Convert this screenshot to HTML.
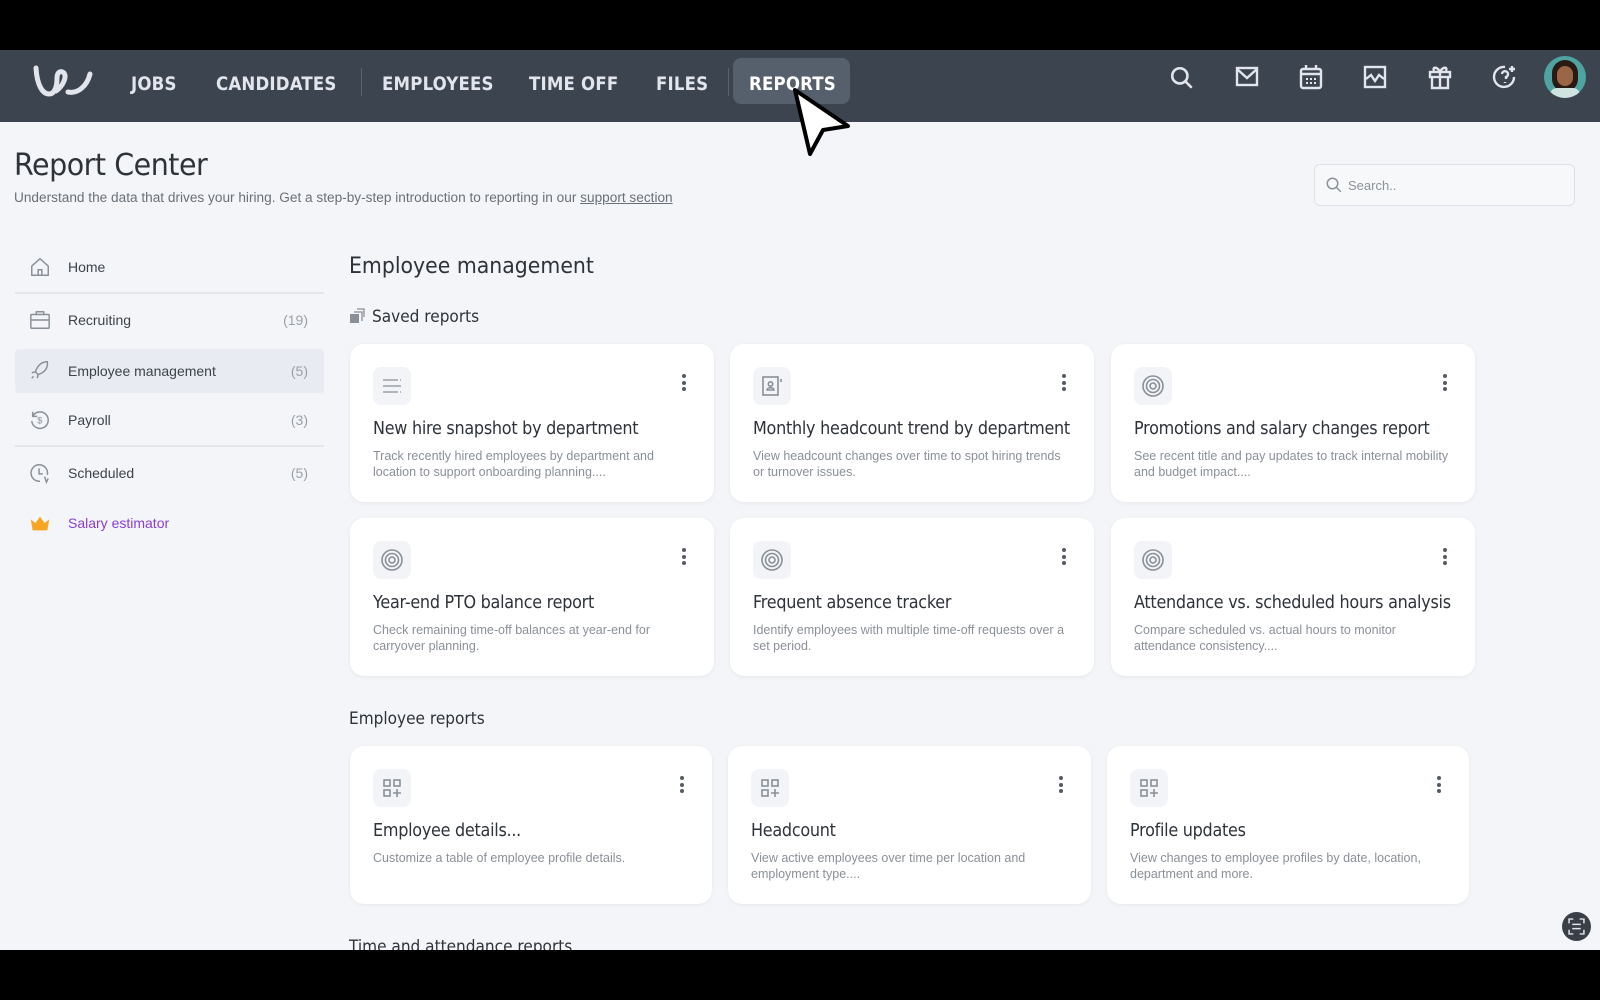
<!DOCTYPE html>
<html><head><meta charset="utf-8"><style>
*{margin:0;padding:0;box-sizing:border-box}
body{width:1600px;height:1000px;background:#000;position:relative;overflow:hidden;font-family:"Liberation Sans",sans-serif}
.abs{position:absolute}
#nav{left:0;top:50px;width:1600px;height:72px;background:#3c4450}
.nl{position:absolute;top:73px;font-size:19px;font-weight:bold;color:#e2e5ec;letter-spacing:.2px;font-family:"DejaVu Sans Condensed","Liberation Sans",sans-serif;transform:scaleX(.97);transform-origin:left}
#page{left:0;top:122px;width:1600px;height:828px;background:#f3f5f8;overflow:hidden}
.side{position:absolute;left:15px;width:309px;height:48px;font-size:14px;color:#3d434b}
.side .t{position:absolute;left:53px;top:15px}
.side .c{position:absolute;right:16px;top:15px;color:#9aa0a8}
.side svg{position:absolute;left:14px;top:12px}
.hr{position:absolute;left:15px;width:309px;height:2px;background:#e3e6eb}
.card{position:absolute;width:364px;height:158px;background:#fff;border-radius:14px;box-shadow:0 1px 4px rgba(0,0,0,.06)}
.card .ib{position:absolute;left:23px;top:23px;width:38px;height:38px;border-radius:8px;background:#f2f4f7}
.card .ib svg{position:absolute;left:7px;top:7px}
.card .dots{position:absolute;right:28px;top:30px;width:4px}
.card .dots i{display:block;width:4px;height:4px;border-radius:2px;background:#555b63;margin-bottom:2.5px}
.card h3{position:absolute;left:23px;top:74px;font-size:18px;font-weight:normal;color:#2e333a;font-family:"DejaVu Sans","Liberation Sans",sans-serif;letter-spacing:-.3px;white-space:nowrap;transform:scaleX(.89);transform-origin:left}
.card p{position:absolute;left:23px;top:104px;width:316px;font-size:12.5px;line-height:16px;color:#8a9098}
</style></head><body>
<div id="nav" class="abs"></div>
<svg class="abs" style="left:33px;top:64px" width="62" height="34" viewBox="0 0 62 34"><path d="M3 4 C4 22 10 30 16 30 C22 30 24 22 24 14 C24 8 28 6 31 9 C34 13 30 22 23 27 M35 28 C45 30 54 22 57 10" fill="none" stroke="#e2e5ec" stroke-width="5" stroke-linecap="round"/></svg>
<div class="nl" style="left:131px">JOBS</div>
<div class="nl" style="left:216px">CANDIDATES</div>
<div class="abs" style="left:361px;top:68px;width:1px;height:28px;background:#5a626e"></div>
<div class="nl" style="left:382px">EMPLOYEES</div>
<div class="nl" style="left:529px">TIME OFF</div>
<div class="nl" style="left:656px">FILES</div>
<div class="abs" style="left:728px;top:68px;width:1px;height:28px;background:#5a626e"></div>
<div class="abs" style="left:733px;top:58px;width:117px;height:46px;border-radius:8px;background:#56606c"></div>
<div class="nl" style="left:749px;color:#fff">REPORTS</div>
<svg class="abs" style="left:1169px;top:65px" width="26" height="26" viewBox="0 0 24 24" fill="none" stroke="#e2e5ec" stroke-width="2.4"><circle cx="10" cy="10" r="7"/><path d="M15 15l6 6"/></svg>
<svg class="abs" style="left:1235px;top:66px" width="24" height="22" viewBox="0 0 24 22" fill="none" stroke="#e2e5ec" stroke-width="2.4"><rect x="2" y="2" width="20" height="17"/><path d="M2 3l10 9 10-9"/></svg>
<svg class="abs" style="left:1299px;top:64px" width="24" height="26" viewBox="0 0 24 26" fill="none" stroke="#e2e5ec" stroke-width="2.4"><rect x="2" y="5" width="20" height="19" rx="2"/><path d="M2 10h20M7 1v5M17 1v5"/><path d="M7 15h2M11 15h2M15 15h2M7 19h2M11 19h2M15 19h2" stroke-width="2"/></svg>
<svg class="abs" style="left:1363px;top:65px" width="24" height="24" viewBox="0 0 24 24" fill="none" stroke="#e2e5ec" stroke-width="2.4"><rect x="2" y="2" width="20" height="20"/><path d="M3 14l5-4 4 6 4-6 5 4"/></svg>
<svg class="abs" style="left:1428px;top:64px" width="24" height="26" viewBox="0 0 24 26" fill="none" stroke="#e2e5ec" stroke-width="2.4"><rect x="2" y="8" width="20" height="5"/><path d="M4 13v11h16V13M12 8v16M12 8c-3-6-8-5-6-1M12 8c3-6 8-5 6-1"/></svg>
<svg class="abs" style="left:1492px;top:64px" width="26" height="26" viewBox="0 0 26 26" fill="none" stroke="#e2e5ec" stroke-width="2.4"><path d="M22 13a10 10 0 1 1-9-10"/><path d="M10 10a3 3 0 1 1 4 3v2M13 18v1"/><path d="M20 2v6M17 5h6"/></svg>
<div class="abs" style="left:1544px;top:56px;width:42px;height:42px;border-radius:50%;background:#4fa3a0;overflow:hidden"><div class="abs" style="left:8px;top:4px;width:26px;height:32px;border-radius:13px;background:#2a1a14"></div><div class="abs" style="left:13px;top:10px;width:16px;height:20px;border-radius:8px;background:#9a6648"></div><div class="abs" style="left:6px;top:32px;width:30px;height:14px;border-radius:10px;background:#cfe3e0"></div></div>

<div id="page" class="abs">
<div class="abs" style="left:14px;top:26px;font-size:30px;color:#2e333a;font-family:'DejaVu Sans','Liberation Sans',sans-serif;letter-spacing:-.5px;transform:scaleX(.95);transform-origin:left">Report Center</div>
<div class="abs" style="left:14px;top:68px;font-size:13.5px;color:#6a7078;transform:scaleX(1.01);transform-origin:left">Understand the data that drives your hiring. Get a step-by-step introduction to reporting in our <u>support section</u></div>
<div class="abs" style="left:1314px;top:42px;width:261px;height:42px;border:1px solid #dde1e6;border-radius:6px;background:#f7f8fa"><svg class="abs" style="left:10px;top:11px" width="18" height="18" viewBox="0 0 24 24" fill="none" stroke="#8c929a" stroke-width="2"><circle cx="10" cy="10" r="7"/><path d="M15 15l6 6"/></svg><span class="abs" style="left:33px;top:13px;font-size:13px;color:#8c929a">Search..</span></div>

<div class="side" style="top:122px"><svg width="22" height="22" viewBox="0 0 24 24" fill="none" stroke="#8a9098" stroke-width="1.6"><path d="M3 11L12 3l9 8v10H3z"/><path d="M10 21v-6h4v6"/></svg><span class="t">Home</span></div>
<div class="hr" style="top:170px"></div>
<div class="side" style="top:175px"><svg width="22" height="22" viewBox="0 0 24 24" fill="none" stroke="#8a9098" stroke-width="1.6"><rect x="2" y="6" width="20" height="15" rx="1"/><path d="M8 6V3h8v3M2 12h20"/></svg><span class="t">Recruiting</span><span class="c">(19)</span></div>
<div class="side" style="top:227px;height:44px;background:#e8ebf1;border-radius:4px"><svg width="22" height="22" viewBox="0 0 24 24" fill="none" stroke="#8a9098" stroke-width="1.6" style="top:10px"><path d="M20 3c-7 0-11 5-13 11l3 3c6-2 11-6 10-14zM7 14l-4 1M10 17l-1 4M5 19l-2 2"/></svg><span class="t" style="top:14px">Employee management</span><span class="c" style="top:14px">(5)</span></div>
<div class="side" style="top:275px"><svg width="22" height="22" viewBox="0 0 24 24" fill="none" stroke="#8a9098" stroke-width="1.6"><path d="M4 8a9 9 0 1 1-1 5M4 3v5h5"/><text x="9" y="16" font-size="10" fill="#8a9098" stroke="none">$</text></svg><span class="t">Payroll</span><span class="c">(3)</span></div>
<div class="hr" style="top:323px"></div>
<div class="side" style="top:328px"><svg width="22" height="22" viewBox="0 0 24 24" fill="none" stroke="#8a9098" stroke-width="1.6"><path d="M20 14a9 9 0 1 0-8 7M11 7v6h4M17 16l2 6 2-4"/></svg><span class="t">Scheduled</span><span class="c">(5)</span></div>
<div class="side" style="top:378px"><svg width="22" height="22" viewBox="0 0 24 24" style="top:12px"><path d="M2 8l5 4 5-7 5 7 5-4-2 12H4z" fill="#f5a623"/></svg><span class="t" style="color:#8a3fd1">Salary estimator</span></div>

<div class="abs" style="left:349px;top:132px;font-size:22px;color:#2e333a;font-family:'DejaVu Sans','Liberation Sans',sans-serif;transform:scaleX(.93);transform-origin:left">Employee management</div>
<svg class="abs" style="left:349px;top:186px" width="16" height="16" viewBox="0 0 16 16"><rect x="1" y="6" width="9" height="9" fill="#8a9098"/><path d="M5 4h8v9M8 1h7v8" fill="none" stroke="#8a9098" stroke-width="1.3"/></svg>
<div class="abs" style="left:372px;top:185px;font-size:16.5px;color:#2e333a;font-family:'DejaVu Sans','Liberation Sans',sans-serif;transform:scaleX(.93);transform-origin:left">Saved reports</div>

<div class="card" style="left:350px;top:222px"><div class="ib"><svg width="24" height="24" viewBox="0 0 24 24" stroke="#9aa0a8" stroke-width="1.6"><path d="M3 6h15M3 12h18M3 18h15M20 6h1M20 18h1"/></svg></div><div class="dots"><i></i><i></i><i></i></div><h3>New hire snapshot by department</h3><p>Track recently hired employees by department and location to support onboarding planning....</p></div>
<div class="card" style="left:730px;top:222px"><div class="ib"><svg width="24" height="24" viewBox="0 0 24 24" fill="none" stroke="#8a9098" stroke-width="1.6"><rect x="3" y="3" width="15" height="18"/><circle cx="10.5" cy="10" r="2.2"/><path d="M7 16c0-3 7-3 7 0z M21 5v3"/></svg></div><div class="dots"><i></i><i></i><i></i></div><h3>Monthly headcount trend by department</h3><p>View headcount changes over time to spot hiring trends or turnover issues.</p></div>
<div class="card" style="left:1111px;top:222px"><div class="ib"><svg width="24" height="24" viewBox="0 0 24 24" fill="none" stroke="#8a9098" stroke-width="1.6"><circle cx="12" cy="12" r="10"/><circle cx="12" cy="12" r="6.5"/><circle cx="12" cy="12" r="3"/></svg></div><div class="dots"><i></i><i></i><i></i></div><h3>Promotions and salary changes report</h3><p>See recent title and pay updates to track internal mobility and budget impact....</p></div>
<div class="card" style="left:350px;top:396px"><div class="ib"><svg width="24" height="24" viewBox="0 0 24 24" fill="none" stroke="#8a9098" stroke-width="1.6"><circle cx="12" cy="12" r="10"/><circle cx="12" cy="12" r="6.5"/><circle cx="12" cy="12" r="3"/></svg></div><div class="dots"><i></i><i></i><i></i></div><h3>Year-end PTO balance report</h3><p>Check remaining time-off balances at year-end for carryover planning.</p></div>
<div class="card" style="left:730px;top:396px"><div class="ib"><svg width="24" height="24" viewBox="0 0 24 24" fill="none" stroke="#8a9098" stroke-width="1.6"><circle cx="12" cy="12" r="10"/><circle cx="12" cy="12" r="6.5"/><circle cx="12" cy="12" r="3"/></svg></div><div class="dots"><i></i><i></i><i></i></div><h3>Frequent absence tracker</h3><p>Identify employees with multiple time-off requests over a set period.</p></div>
<div class="card" style="left:1111px;top:396px"><div class="ib"><svg width="24" height="24" viewBox="0 0 24 24" fill="none" stroke="#8a9098" stroke-width="1.6"><circle cx="12" cy="12" r="10"/><circle cx="12" cy="12" r="6.5"/><circle cx="12" cy="12" r="3"/></svg></div><div class="dots"><i></i><i></i><i></i></div><h3>Attendance vs. scheduled hours analysis</h3><p>Compare scheduled vs. actual hours to monitor attendance consistency....</p></div>

<div class="abs" style="left:349px;top:587px;font-size:16.5px;color:#2e333a;font-family:'DejaVu Sans','Liberation Sans',sans-serif;transform:scaleX(.93);transform-origin:left">Employee reports</div>
<div class="card" style="left:350px;top:624px;width:362px"><div class="ib"><svg width="24" height="24" viewBox="0 0 24 24" fill="none" stroke="#8a9098" stroke-width="1.6"><rect x="4" y="4" width="6" height="6"/><rect x="14" y="4" width="6" height="6"/><rect x="4" y="14" width="6" height="6"/><path d="M17 13v8M13 17h8"/></svg></div><div class="dots"><i></i><i></i><i></i></div><h3>Employee details...</h3><p>Customize a table of employee profile details.</p></div>
<div class="card" style="left:728px;top:624px;width:363px"><div class="ib"><svg width="24" height="24" viewBox="0 0 24 24" fill="none" stroke="#8a9098" stroke-width="1.6"><rect x="4" y="4" width="6" height="6"/><rect x="14" y="4" width="6" height="6"/><rect x="4" y="14" width="6" height="6"/><path d="M17 13v8M13 17h8"/></svg></div><div class="dots"><i></i><i></i><i></i></div><h3>Headcount</h3><p>View active employees over time per location and employment type....</p></div>
<div class="card" style="left:1107px;top:624px;width:362px"><div class="ib"><svg width="24" height="24" viewBox="0 0 24 24" fill="none" stroke="#8a9098" stroke-width="1.6"><rect x="4" y="4" width="6" height="6"/><rect x="14" y="4" width="6" height="6"/><rect x="4" y="14" width="6" height="6"/><path d="M17 13v8M13 17h8"/></svg></div><div class="dots"><i></i><i></i><i></i></div><h3>Profile updates</h3><p>View changes to employee profiles by date, location, department and more.</p></div>

<div class="abs" style="left:349px;top:815px;font-size:16.5px;color:#2e333a;font-family:'DejaVu Sans','Liberation Sans',sans-serif;transform:scaleX(.93);transform-origin:left">Time and attendance reports</div>
<div class="abs" style="left:1562px;top:790px;width:29px;height:29px;border-radius:50%;background:#3a3f47"><svg class="abs" style="left:6px;top:6px" width="17" height="17" viewBox="0 0 16 16" fill="none" stroke="#e2e5ec" stroke-width="1.4"><path d="M1 5V1h4M11 1h4v4M15 11v4h-4M5 15H1v-4M4 6h8M4 10h8"/></svg></div>
</div>
<svg class="abs" style="left:790px;top:86px" width="64" height="74" viewBox="0 0 64 74"><path d="M5 4 L58 40 L33 44 L20 68 Z" fill="#fff" stroke="#000" stroke-width="4" stroke-linejoin="round"/></svg>
</body></html>
